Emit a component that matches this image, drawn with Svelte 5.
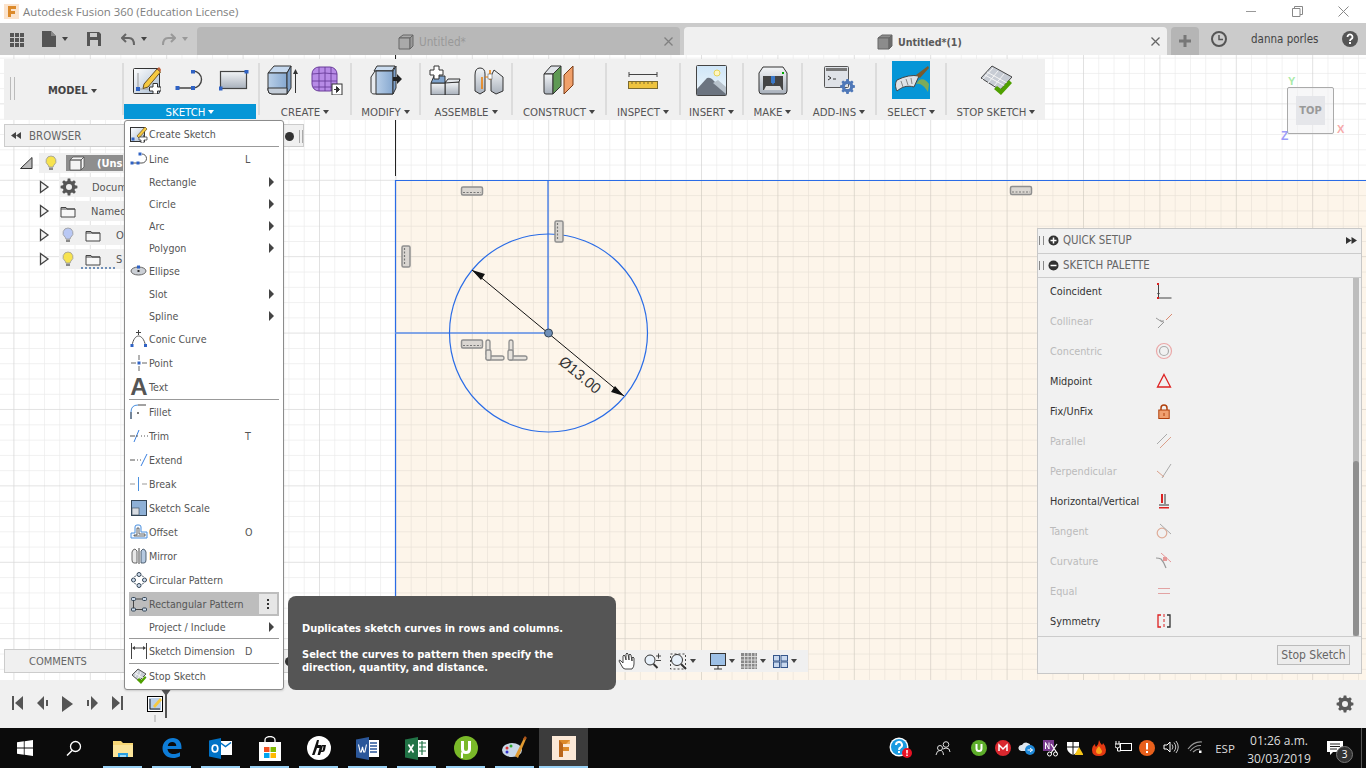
<script>
const s = (w, h, inner) => `<svg xmlns="http://www.w3.org/2000/svg" width="${w}" height="${h}" viewBox="0 0 ${w} ${h}" style="display:block">${inner}</svg>`;
const gear = (cx, cy, R, r, hole, fill, n = 8) => {
  let d = '';
  for (let i = 0; i < n; i++) {
    const a = (i / n) * Math.PI * 2, w = Math.PI / n * 0.55;
    const p = [[R, a - w * 0.7], [R, a + w * 0.7], [r, a + w * 1.25], [r, a + Math.PI * 2 / n - w * 1.25]];
    p.forEach(([q, t], j) => { d += `${i === 0 && j === 0 ? 'M' : 'L'}${(cx + q * Math.cos(t)).toFixed(2)} ${(cy + q * Math.sin(t)).toFixed(2)}`; });
  }
  d += `Z M${cx + hole} ${cy}a${hole} ${hole} 0 1 0 ${-2 * hole} 0a${hole} ${hole} 0 1 0 ${2 * hole} 0Z`;
  return `<path d="${d}" fill="${fill}" fill-rule="evenodd"/>`;
};
const blue = '#2f62c4', ink = '#444';
const dot = (x, y, z = 4, c = blue) => `<rect x="${x - z / 2}" y="${y - z / 2}" width="${z}" height="${z}" fill="${c}"/>`;
const bulb = (f) => s(12, 16, `<path d="M6 1a5 5 0 0 0-3 9c.6.6.8 1.200.8 2h4.400c0-.8.2-1.400.8-2A5 5 0 0 0 6 1Z" fill="${f}" stroke="#999" stroke-width=".8"/><path d="M4 12.500h4v2.500H4z" fill="#888"/>`);
const folder = s(16, 13, `<path d="M1 2.500h5l1 1.500h8v8H1z" fill="#f7f7f7" stroke="#444" stroke-width="1"/><path d="M1 4h14" stroke="#444"/>`);
const arrowR = s(11, 14, `<path d="M1.500 1.500 9 7l-7.500 5.500z" fill="#f4f4f4" stroke="#444" stroke-width="1.300"/>`);

const tb = {
  createSketch: s(28, 28, `<rect x=".5" y="2.500" width="26" height="25" rx="1" fill="url(#gW)" stroke="#333"/><path d="M5 7v16h16" stroke="#999" fill="none"/>${dot(5, 23)}<path d="M11 18 24 3l3.500 3L15 21l-5 1.500z" fill="#f6c93f" stroke="#6c5220"/><path d="M24 3l3.500 3 .5-2.500L26 1z" fill="#c0603a"/><path d="M20 17.500h4.500V21H28v4h-3.500v3H20v-3h-3.500v-4H20z" fill="#fff" stroke="#333"/>`),
  line: s(30, 20, `<path d="M2 18H18a8.500 8.500 0 0 0 0-17" fill="none" stroke="${ink}" stroke-width="1.400"/>${dot(2.5, 18)}${dot(18, 18)}${dot(18, 1.5)}`),
  rect: s(30, 21, `<rect x="1.500" y="1.500" width="26" height="17" fill="url(#gG)" stroke="#444" stroke-width="1.200"/>${dot(1.5, 18.5)}${dot(27.5, 1.5)}`),
  extrude: s(31, 30, `<path d="M1 8 7 1h17l-4 7z" fill="#c5d8ee" stroke="#333"/><path d="M1 8h19v21H5q-4 0-4-4z" fill="url(#gB)" stroke="#333"/><path d="M20 8l4-7v22l-4 6z" fill="#7d9fc8" stroke="#333"/><path d="M1 23h19v6H5q-4 0-4-4z" fill="#c4cdd8" stroke="#333"/><path d="M28.500 28V5" stroke="#333"/><path d="M26 9l2.500-5L31 9z" fill="#333"/>`),
  form: s(32, 30, `<rect x="1" y="2" width="25" height="24" rx="7" fill="#b78be6" stroke="#6a3d9a"/><path d="M1 9q12-2 25 0M1 16h25M2 22h23M8 2v24M14 2v24M20 2v24" stroke="#6a3d9a" fill="none" stroke-width=".9"/><rect x="21" y="19" width="10" height="11" fill="#fff" stroke="#333"/><path d="M23 24.500h3M25.500 21.500l3 3-3 3z" fill="#333" stroke="#333"/>`),
  modify: s(32, 30, `<path d="M7 1h18l-3 5H4z" fill="#cbdcef" stroke="#333"/><path d="M1 26C1 29 3 29 6 29h17V6H5L1 12z" fill="#e8ebef" stroke="#333"/><path d="M6 6h17v23H6z" fill="url(#gB)" stroke="#333"/><path d="M23 6l3-5v22l-3 6z" fill="#7d9fc8" stroke="#333"/><path d="M23 12h4V9l5 5-5 5v-3h-4z" fill="#222"/>`),
  asm1: s(32, 30, `<path d="M16 17h14v13H16z" fill="url(#gG)" stroke="#333"/><path d="M2 18h14v12H2z" fill="url(#gG)" stroke="#333"/><path d="M2 18l3-7h11v7z" fill="#7fa3cc" stroke="#333"/><path d="M16 18l3-4h12l-1 3z" fill="#e5e8ec" stroke="#333"/><path d="M5 1h5v4h4v5h-4v4H5v-4H1V5h4z" fill="#fff" stroke="#333"/>`),
  asm2: s(30, 30, `<path d="M1 26V10q0-7 5-7t5 6v17l-5 3z" fill="url(#gG)" stroke="#333"/><path d="M29 26V12l-9-7-3 6v15l5 3z" fill="url(#gG)" stroke="#333"/><path d="M8 12v12M16 5v10" stroke="#f07d00" stroke-width="1.500"/><path d="M11 12h6" stroke="#f07d00"/><rect x="14" y="9" width="4" height="5" fill="#fff" stroke="#666" stroke-width=".6"/>`),
  construct: s(32, 30, `<path d="M1 9 8 1h10l-8 8z" fill="#dfe3e8" stroke="#333"/><path d="M1 9h9v20H3q-2 0-2-2z" fill="url(#gG)" stroke="#333"/><path d="M10 9l8-8v20l-8 8z" fill="#5f9a55" stroke="#333"/><path d="M21 29V10l9-9v19z" fill="#f0a06a" stroke="#7b3a14"/>`),
  inspect: s(30, 18, `<path d="M1 1v5M29 1v5M1 3.500h28" stroke="#444" fill="none"/><rect x=".5" y="10.500" width="29" height="7" fill="#eec33e" stroke="#7b6a30"/><path d="M4 11v2M8 11v2M12 11v2M16 11v2M20 11v2M24 11v2" stroke="#7b6a30"/>`),
  insert: s(31, 31, `<rect x=".5" y=".5" width="30" height="30" rx="1" fill="url(#gSky)" stroke="#444"/><circle cx="21" cy="8" r="3" fill="#fff6c0" stroke="#e6d45a"/><path d="M1 30V24L11 13q2-1 5 1l14 14v2z" fill="#6c7480"/><path d="M17 18l5-3 8 7v7z" fill="#b8c2cc"/>`),
  make: s(30, 30, `<path d="M1 8 5 2h20l4 6v18q0 3-3 3H4q-3 0-3-3z" fill="url(#gG)" stroke="#333"/><rect x="5" y="11" width="20" height="14" fill="#444"/><path d="M8 21h14l2 4H6z" fill="#ddd"/><rect x="13" y="11" width="4" height="7" fill="#3a78c8"/><path d="M14 18h2l-1 2z" fill="#3a78c8"/><rect x="24" y="7" width="2" height="2" fill="#0a0"/>`),
  addins: s(31, 28, `<rect x=".5" y=".5" width="24" height="21" rx="1" fill="#dfe2e7" stroke="#555"/><rect x="2" y="2" width="21" height="3" fill="#777"/><path d="M4 10l3 2-3 2M9 13h3" stroke="#333" fill="none"/>${gear(23.5, 20.5, 7.5, 5.8, 2.6, '#4f78b8')}`),
  select: s(38, 38, `<rect width="38" height="38" fill="#0696d7"/><path d="M5 19q12-6 22-4l-5 11c-7-2-12 0-17 4-2-4-2-8 0-11z" fill="#dfe2e6" stroke="#444"/><path d="M9 20l2 6M14 18l2 6M19 17l1 6" stroke="#888"/><path d="M24 14 36 5l1 2-9 10z" fill="#7b5a2c"/><path d="M27 19c4-2 7 0 10 4l-1 8c-4-6-7-9-12-8z" fill="#7dab5a"/>`),
  stop: s(32, 30, `<path d="M1 13 12 1l20 11-12 13z" fill="#c7ccd4" stroke="#444"/><path d="M7 7l20 11M5 10l20 11M13 3l-11 12M18 6 8 18M24 9 14 21" stroke="#f5f5f5" fill="none"/><path d="M14 24l3-3 4 3 8-9 3 3-11 12z" fill="#4fa000"/>`)
};

const mi = {
  createS: s(18, 18, `<rect x=".5" y="2.500" width="14" height="14" fill="url(#gW)" stroke="#333"/>${dot(3, 14, 3)}<path d="M7 11 15 2l2 2-8 9z" fill="#f6c93f" stroke="#6c5220" stroke-width=".7"/><path d="M11 12h3v-2h0v2h3v3h-3v3h-3v-3H9v-3h2z" fill="#fff" stroke="#444" stroke-width=".8"/>`),
  line: s(18, 14, `<path d="M2 11h10a4.500 4.500 0 0 0 0-9" fill="none" stroke="#555"/>${dot(2, 11, 3)}${dot(8, 11, 3)}${dot(10, 2, 3)}`),
  ellipse: s(18, 12, `<ellipse cx="8.500" cy="6" rx="7.500" ry="4" fill="#ccd0d6" stroke="#666"/>${dot(8.5, 2, 3)}${dot(8.5, 6, 2, '#333')}`),
  conic: s(18, 18, `<path d="M2 16C3 9 6 6 8.500 6s6 3 7 10" fill="none" stroke="#555"/>${dot(2, 15.5, 3)}${dot(15.5, 15.5, 3)}<path d="M8.500 0v5M6 2.500h5" stroke="#444"/>`),
  point: s(16, 16, `<path d="M0 8h5M11 8h5M8 0v5M8 11v5" stroke="#666"/>${dot(8, 8, 3)}`),
  fillet: s(18, 16, `<path d="M1 15V8q0-7 7-7" fill="none" stroke="#4a90e0"/><path d="M8 1h8M1 8v7" stroke="#444"/>${dot(8, 9, 1.6, '#333')}`),
  trim: s(18, 14, `<path d="M0 7h5M11 7h1M14 7h1M17 7h1" stroke="#555"/><path d="M4 13 9 1" stroke="#3a80e0"/><path d="M6 7h2" stroke="#555"/>`),
  extend: s(18, 14, `<path d="M0 7h5M7 7h1M10 7h1" stroke="#555"/><path d="M11 13 17 1" stroke="#3a80e0"/>`),
  brk: s(18, 14, `<path d="M0 7h5M12 7h5" stroke="#999"/><path d="M8.500 0v14" stroke="#4a90e0"/>`),
  scale: s(16, 16, `<rect x=".5" y=".5" width="15" height="15" fill="#8eb0d6" stroke="#345"/><rect x="1" y="8" width="7" height="7" fill="#d8dce2" stroke="#345" stroke-width=".6"/>`),
  offset: s(18, 16, `<path d="M1 14V9h4V3q0-2 2-2h2q2 0 2 2v5h6v6z" fill="#f4f8fd" stroke="#4a90e0"/><path d="M4 12V11h3V4h2v6h6v2z" fill="none" stroke="#444" stroke-width=".8"/>`),
  mirror: s(16, 16, `<path d="M6 15H3q-2 0-2-3V4q1-3 3-3l2 2z" fill="#e8e8e8" stroke="#444" stroke-width=".8"/><path d="M10 15h3q2 0 2-3V4q-1-3-3-3l-2 2z" fill="#b5c9e0" stroke="#345" stroke-width=".8"/><path d="M8 0v16" stroke="#444"/>`),
  circ: s(16, 16, `<g fill="#cfdcec" stroke="#345"><circle cx="8" cy="2.500" r="2"/><circle cx="13.500" cy="8" r="2"/><circle cx="8" cy="13.500" r="2"/><circle cx="2.500" cy="8" r="2"/></g><path d="M5 3.500 3.500 5M11 3.500 12.500 5M5 12.500 3.500 11M11 12.500 12.500 11" stroke="#345"/>`),
  rectp: s(16, 15, `<g fill="#cfdcec" stroke="#345"><rect x=".5" y=".5" width="4" height="3" rx="1"/><rect x="11.500" y=".5" width="4" height="3" rx="1"/><rect x=".5" y="11" width="4" height="3" rx="1"/><rect x="11.500" y="11" width="4" height="3" rx="1"/></g><path d="M5 2h6M5 12.500h6M2.500 4v7" stroke="#444"/>`),
  dim: s(16, 16, `<path d="M.5 0v16M15.500 0v16M2 5h12" stroke="#444"/><path d="M1 5l3-2v4zM15 5l-3-2v4z" fill="#444"/>`),
  stopS: s(16, 16, `<path d="M1 7 7 1l8 5-7 7z" fill="#c7ccd4" stroke="#555"/><path d="M4 5l8 5M7 3 4 9M10 4 7 11" stroke="#f5f5f5"/><path d="M6 12l2-2 2 2 4-4 1.500 1.500L10 16z" fill="#4fa000"/>`)
};

const menu = [
  { t: 'Create Sketch', i: mi.createS },
  { sep: 1 },
  { t: 'Line', i: mi.line, k: 'L' },
  { t: 'Rectangle', sub: 1 }, { t: 'Circle', sub: 1 }, { t: 'Arc', sub: 1 }, { t: 'Polygon', sub: 1 },
  { t: 'Ellipse', i: mi.ellipse },
  { t: 'Slot', sub: 1 }, { t: 'Spline', sub: 1 },
  { t: 'Conic Curve', i: mi.conic },
  { t: 'Point', i: mi.point },
  { t: 'Text', a: 1 },
  { sep: 1 },
  { t: 'Fillet', i: mi.fillet },
  { t: 'Trim', i: mi.trim, k: 'T' },
  { t: 'Extend', i: mi.extend },
  { t: 'Break', i: mi.brk },
  { t: 'Sketch Scale', i: mi.scale },
  { t: 'Offset', i: mi.offset, k: 'O' },
  { t: 'Mirror', i: mi.mirror },
  { t: 'Circular Pattern', i: mi.circ },
  { t: 'Rectangular Pattern', i: mi.rectp, hl: 1 },
  { t: 'Project / Include', sub: 1 },
  { sep: 1 },
  { t: 'Sketch Dimension', i: mi.dim, k: 'D' },
  { sep: 1 },
  { t: 'Stop Sketch', i: mi.stopS }
];

const groups = [
  { l: 'SKETCH', active: 1, gap: 14, ic: [tb.createSketch, tb.line, tb.rect] },
  { l: 'CREATE', gap: 13, ic: [tb.extrude, tb.form] },
  { l: 'MODIFY', ic: [tb.modify] },
  { l: 'ASSEMBLE', gap: 13, ic: [tb.asm1, tb.asm2] },
  { l: 'CONSTRUCT', ic: [tb.construct] },
  { l: 'INSPECT', ic: [tb.inspect] },
  { l: 'INSERT', ic: [tb.insert] },
  { l: 'MAKE', ic: [tb.make] },
  { l: 'ADD-INS', ic: [tb.addins] },
  { l: 'SELECT', ic: [tb.select] },
  { l: 'STOP SKETCH', ic: [tb.stop] }
];

const pal = [
  { t: 'Coincident', on: 1, i: s(16, 18, `<path d="M2.500 2v14M2.500 16h13" stroke="#444"/>${dot(2, 2, 2, '#d22')}${dot(2, 16, 2, '#d22')}<path d="M1 11h3l-1.500 2z" fill="#444"/>`) },
  { t: 'Collinear', i: s(18, 16, `<path d="M3 15 9 9M1 5l6 4" stroke="#999"/><path d="M11 7l6-6" stroke="#d98a70"/><path d="M5 7l3 2v-2" stroke="#999" fill="none"/>`) },
  { t: 'Concentric', i: s(18, 18, `<circle cx="9" cy="9" r="7.500" fill="none" stroke="#eba8a8" stroke-width="1.200"/><circle cx="9" cy="9" r="4.500" fill="none" stroke="#aaa" stroke-width="1.200"/>`) },
  { t: 'Midpoint', on: 1, i: s(16, 16, `<path d="M8 1.500 14.500 14h-13z" fill="none" stroke="#d22" stroke-width="1.300"/>`) },
  { t: 'Fix/UnFix', on: 1, i: s(12, 15, `<path d="M3 6V4a3 3 0 0 1 6 0v2" fill="none" stroke="#b0400c" stroke-width="1.500"/><rect x=".8" y="6" width="10.400" height="8.500" fill="#f0a070" stroke="#b0400c"/><path d="M6 9v3" stroke="#b0400c"/>`) },
  { t: 'Parallel', i: s(16, 16, `<path d="M1 11 11 1" stroke="#aaa"/><path d="M4 15 15 4" stroke="#dba08a"/>`) },
  { t: 'Perpendicular', i: s(16, 16, `<path d="M6 15 15 1" stroke="#aaa"/><path d="M1 8l7 6" stroke="#dba08a"/>`) },
  { t: 'Horizontal/Vertical', on: 1, i: s(10, 15, `<path d="M6 0v10M0 11h10" stroke="#333"/><path d="M2 0h2v9H2zM0 13h10v1.500H0z" fill="#d22"/>`) },
  { t: 'Tangent', i: s(16, 16, `<circle cx="6" cy="10" r="4.800" fill="none" stroke="#dfac98" stroke-width="1.200"/><path d="M4 1l11 10" stroke="#aaa"/>`) },
  { t: 'Curvature', i: s(16, 16, `<path d="M0 5q3 0 5 1 3 3 5 9" fill="none" stroke="#999" stroke-width="1.200"/><path d="M5 0l10 9" stroke="#e59898"/>${dot(9, 6, 4, '#e59898')}`) },
  { t: 'Equal', i: s(14, 8, `<path d="M1 1.500h12M1 6.500h12" stroke="#e2a3a3"/>`) },
  { t: 'Symmetry', on: 1, i: s(14, 14, `<path d="M4 1H1v12h3" fill="none" stroke="#d22" stroke-width="1.300"/><path d="M10 1h3v12h-3" fill="none" stroke="#333" stroke-width="1.300"/><path d="M7 0v14" stroke="#d22" stroke-dasharray="3 2"/>`) }
];

const apps = [
  { i: s(16, 16, `<path d="M0 2.200 6.800 1.300V7.600H0zM7.600 1.200 16 0V7.600H7.600zM0 8.400h6.800v6.300L0 13.800zM7.600 8.400H16V16l-8.400-1.200z" fill="#fff"/>`) },
  { i: s(16, 16, `<circle cx="9.500" cy="6.500" r="5" fill="none" stroke="#fff" stroke-width="1.300"/><path d="M6 10.500 1 15.500" stroke="#fff" stroke-width="1.500"/>`) },
  { u: 1, i: s(22, 18, `<path d="M1 2h8l2 2h10v14H1z" fill="#f8d775"/><path d="M1 6h20v12H1z" fill="#fce59a"/><path d="M6 14h10v4h-2v-2H8v2H6z" fill="#2a9fe0"/><path d="M8 16h6v2H8z" fill="#9ad8f8"/>`) },
  { u: 1, i: s(20, 20, `<path d="M19.500 11H5.500c.3 3 2.700 5 6 5 2.300 0 4.800-.7 6.500-1.800v4C16 19.400 13.500 20 11 20 5 20 .5 16 .5 10.300.5 4.500 5 0 11 0c5 0 9 3.500 8.500 11zM5.800 8h8.500c0-2.500-1.800-4-4.100-4S6.100 5.600 5.800 8z" fill="#0e7dd8"/>`) },
  { u: 1, i: s(23, 21, `<path d="M10 3h13v14H10z" fill="#fff"/><path d="M11 4.500l5.500 4 5.500-4" stroke="#0072c6" stroke-width="1.500" fill="none"/><path d="M0 2.500 12 0v21L0 18.500z" fill="#0072c6"/><ellipse cx="6" cy="10.500" rx="2.800" ry="3.500" fill="none" stroke="#fff" stroke-width="1.700"/>`) },
  { u: 1, i: s(24, 25, `<path d="M1 6h22v19H1z" fill="#fff"/><path d="M7 7V4a5 3.500 0 0 1 10 0v3" fill="none" stroke="#fff" stroke-width="1.300"/><path d="M6 11h5.500v5H6z" fill="#f25022"/><path d="M12.500 11H18v5h-5.500z" fill="#7fba00"/><path d="M6 17h5.500v5H6z" fill="#00a4ef"/><path d="M12.500 17H18v5h-5.500z" fill="#ffb900"/>`) },
  { u: 1, i: s(24, 24, `<circle cx="12" cy="12" r="12" fill="#fff"/><path d="M10 4 5 19h2.500l2.500-7h2.500l-2 7H13l2.500-7.500q.5-2-1.500-2.500h-3L12 4z" fill="#111"/><path d="M15 9h4l-1 5q-.5 2-2.500 2h-2l.5-1.500h1.500l1-4h-1.500z" fill="#111"/>`) },
  { u: 1, i: s(23, 23, `<path d="M10 3h13v17H10z" fill="#fff"/><path d="M14 6h7M14 9h7M14 12h7M14 15h7" stroke="#2b579a" stroke-width="1.500"/><path d="M0 2.500 13 0v23L0 20.500z" fill="#2b579a"/><path d="M2.500 7.500 4.200 15h1.100L6.500 10l1.200 5h1.100l1.700-7.500" stroke="#fff" fill="none" stroke-width="1.100"/>`) },
  { u: 1, i: s(23, 23, `<path d="M10 3h13v17H10z" fill="#fff"/><path d="M14 6h7M14 10h7M14 14h7M17 4v14" stroke="#217346" stroke-width="1.200"/><path d="M0 2.500 13 0v23L0 20.500z" fill="#217346"/><path d="M3.500 7.500l5 8M8.500 7.500l-5 8" stroke="#fff" stroke-width="1.700"/>`) },
  { u: 1, i: s(24, 24, `<circle cx="12" cy="12" r="12" fill="#7ab929"/><path d="M7 5v8q0 5 5 5t5-5V5h-3v8q0 2-2 2t-2-2V5z" fill="#fff"/><path d="M7 16v6h2v-5z" fill="#fff"/>`) },
  { u: 1, i: s(25, 24, `<ellipse cx="10" cy="14" rx="10" ry="7" fill="#c9d8e8"/><circle cx="5" cy="12" r="1.500" fill="#d33"/><circle cx="9" cy="10" r="1.500" fill="#3a3"/><circle cx="5" cy="16" r="1.500" fill="#33c"/><path d="M13 20 22 2l2 1-8 19z" fill="#e09a30"/><path d="M21 3l2-3 2 2-2 2z" fill="#b0561a"/>`) },
  { u: 1, active: 1, i: s(24, 24, `<rect width="24" height="24" fill="#fbe8d6"/><path d="M7 4h11v4h-7v3h6v4h-6v6H7z" fill="#dc8a2a"/><path d="M11 8h7V4l-4 4z" fill="#f2b56a"/><path d="M7 4l4 4v13H7z" fill="#b9651a"/>`) }
];

const tray = [
  s(16, 16, `<circle cx="8" cy="8" r="8" fill="#5dad2a"/><path d="M4.500 4v4.500q0 3.500 3.500 3.500t3.500-3.500V4H9.500v4.500q0 1.500-1.500 1.500T6.500 8.500V4z" fill="#fff"/>`),
  s(16, 16, `<circle cx="8" cy="8" r="8" fill="#d9272e"/><path d="M4 11V5l4 4 4-4v6" fill="none" stroke="#fff" stroke-width="1.500"/>`),
  s(18, 15, `<path d="M3 11a3 3 0 0 1 1-6 5 5 0 0 1 9 1 3 3 0 0 1 1 5z" fill="#dfe6ee"/><circle cx="12" cy="10" r="5" fill="#1e88d8"/><path d="M9.500 10h5M12 8l2.500 2-2.500 2" stroke="#fff" fill="none"/>`),
  s(16, 17, `<rect width="11" height="11" fill="#7a3b8f"/><path d="M2.500 9V2.500L6 9V2.500" stroke="#fff" fill="none"/><path d="M8 4l6 9M14 4l-6 9" stroke="#fff" stroke-width="1.200"/><circle cx="6.500" cy="14" r="2" fill="none" stroke="#fff"/><circle cx="12.500" cy="14" r="2" fill="none" stroke="#fff"/>`),
  s(16, 16, `<path d="M0 2h12v6q0 4-6 7-6-3-6-7z" fill="#fff"/><path d="M6 2v13M0 7h12" stroke="#111"/><path d="M12 7l4.500 8h-9z" fill="#f5c518"/>`),
  s(14, 16, `<path d="M7 0q1 3 3 5 1-1 1-2 3 3 3 7 0 6-7 6T0 10q0-4 3-6 0 2 1 3 3-3 3-7z" fill="#e43a12"/><path d="M7 6q2 3 3 5 0 3-3 3t-3-3q0-2 3-5z" fill="#f9a11b"/>`),
  s(17, 13, `<rect x="5.500" y="3.500" width="11" height="7" fill="none" stroke="#fff"/><path d="M1 4V1M4 4V1M0 4h5v2q0 2-2.500 2T0 6zM2.500 8v3h3" stroke="#fff" fill="none"/>`),
  s(16, 16, `<circle cx="8" cy="8" r="8" fill="#e8601c"/><path d="M8 3v6.500M8 11v2" stroke="#fff" stroke-width="2"/>`),
  s(16, 14, `<path d="M1 5h3l3-3v10L4 9H1z" fill="none" stroke="#fff"/><path d="M9 4.500q2 2.500 0 5M11 2.500q3.500 4.500 0 9M13 1q4.500 6 0 12" fill="none" stroke="#ddd" stroke-width=".9"/>`),
  s(16, 13, `<path d="M1 9q6-8 14-7M3 11q5-6 11-5.500M6 12q3-3 7-3" fill="none" stroke="#999" stroke-width="1.100"/><rect x="12" y="10.500" width="2.500" height="2.500" fill="#fff"/>`)
];

const gearTool = s(18, 18, gear(9, 9, 8.5, 6.5, 3, '#595959'));
const gearDoc = s(18, 18, gear(9, 9, 8.5, 6.3, 3, '#555'));
const miniBox = (a, b) => s(16, 16, `<path d="M1 4 5 1h10l-3 3z" fill="${a}" stroke="#666"/><path d="M1 4h11v11H1z" fill="${a}" stroke="#666"/><path d="M12 4l3-3v11l-3 3z" fill="${b}" stroke="#666"/>`);
const rwd = s(10, 7, `<path d="M5 0v7L0 3.500zM10 0v7L5 3.500z" fill="#444"/>`);
const ffw = s(11, 7, `<path d="M0 0v7l5.500-3.500zM5.500 0v7L11 3.500z" fill="#333"/>`);
</script>

<svg class="defs" width="0" height="0" aria-hidden="true">
  <defs>
    <linearGradient id="gW" x1="0" y1="0" x2="1" y2="1"><stop offset="0" stop-color="#fff"/><stop offset="1" stop-color="#a9bcd2"/></linearGradient>
    <linearGradient id="gG" x1="0" y1="0" x2="0" y2="1"><stop offset="0" stop-color="#f3f5f7"/><stop offset="1" stop-color="#a8b0bb"/></linearGradient>
    <linearGradient id="gB" x1="0" y1="0" x2="1" y2="0"><stop offset="0" stop-color="#b9cfe8"/><stop offset="1" stop-color="#86a8d0"/></linearGradient>
    <linearGradient id="gSky" x1="0" y1="0" x2="0" y2="1"><stop offset="0" stop-color="#cfe6f8"/><stop offset="1" stop-color="#eef6fb"/></linearGradient>
  </defs>
</svg>

<div class="app">
  <header class="title">
    <span class="logo">{@html s(15, 15, `<rect width="15" height="15" fill="#fbe3cc"/><path d="M4 2h8v3H7v2h4v3H7v3H4z" fill="#dc8a2a"/>`)}</span>
    <span class="title-text">Autodesk Fusion 360 (Education License)</span>
    <span class="win">
      <span class="wbtn">{@html s(11, 11, `<path d="M0 5.500h10" stroke="#999"/>`)}</span>
      <span class="wbtn">{@html s(11, 11, `<path d="M.5 2.500h7.500v8H.5zM2.500 2.500V.5h8v8H8" fill="none" stroke="#888"/>`)}</span>
      <span class="wbtn">{@html s(11, 11, `<path d="M.5.5l10 10M10.500.5l-10 10" stroke="#888"/>`)}</span>
    </span>
  </header>

  <div class="tabbar">
    <div class="tools">
      <span class="t t1">{@html s(16, 15, `<g fill="#555"><rect x="1" y="1" width="4" height="4"/><rect x="6" y="1" width="4" height="4"/><rect x="11" y="1" width="4" height="4"/><rect x="1" y="6" width="4" height="4"/><rect x="6" y="6" width="4" height="4"/><rect x="11" y="6" width="4" height="4"/><rect x="1" y="11" width="4" height="4"/><rect x="6" y="11" width="4" height="4"/><rect x="11" y="11" width="4" height="4"/></g>`)}</span>
      <span class="t t2">{@html s(14, 16, `<path d="M0 0h9l5 5v11H0z" fill="#555"/><path d="M9 0v5h5" fill="#888"/>`)}</span>
      <span class="caret dk"></span>
      <span class="t t3">{@html s(14, 14, `<path d="M0 0h12l2 2v12H0z" fill="#555"/><rect x="3" y="1" width="7" height="4" fill="#ccc"/><rect x="3" y="8" width="8" height="6" fill="#ccc"/>`)}</span>
      <span class="t t4">{@html s(14, 13, `<path d="M5 1 1 5l4 4M1 5h7q5 0 5 7" fill="none" stroke="#666" stroke-width="2"/>`)}</span>
      <span class="caret dk"></span>
      <span class="t t5">{@html s(14, 13, `<path d="M9 1l4 4-4 4M13 5H6q-5 0-5 7" fill="none" stroke="#999" stroke-width="2"/>`)}</span>
      <span class="caret lt"></span>
    </div>
    <div class="tab off"><span class="tab-ico">{@html miniBox('#aaa', '#999')}</span><span class="tab-name">Untitled*</span><span class="x">{@html s(9, 9, `<path d="M.5.5l8 8M8.500.5l-8 8" stroke="#808080" stroke-width="1.300"/>`)}</span></div>
    <div class="tab on"><span class="tab-ico">{@html miniBox('#8c8c8c', '#6c6c6c')}</span><span class="tab-name">Untitled*(1)</span><span class="x">{@html s(9, 9, `<path d="M.5.5l8 8M8.500.5l-8 8" stroke="#666" stroke-width="1.300"/>`)}</span></div>
    <div class="plus">{@html s(14, 14, `<path d="M7 1v12M1 7h12" stroke="#777" stroke-width="3"/>`)}</div>
    <span class="clock">{@html s(16, 16, `<circle cx="8" cy="8" r="7" fill="#ccc" stroke="#555" stroke-width="2"/><path d="M8 4v4.500h4" fill="none" stroke="#555" stroke-width="1.500"/>`)}</span>
    <span class="user">danna porles</span>
    <span class="help">{@html s(16, 16, `<circle cx="8" cy="8" r="8" fill="#555"/><path d="M5.500 6a2.500 2.500 0 1 1 3.800 2.100C8.400 8.700 8 9 8 10" fill="none" stroke="#fff" stroke-width="1.800"/><rect x="7" y="11" width="2" height="2" fill="#fff"/>`)}</span>
  </div>

  <main class="canvas">
    <svg class="scene" width="1366" height="625" viewBox="0 55 1366 625">
      <defs>
        <pattern id="minor" width="15.280" height="15.280" patternUnits="userSpaceOnUse" x="13.400" y="11.800">
          <path d="M0 0V15.280M0 0H15.280" stroke="#000" stroke-opacity=".08" stroke-width="1.300"/>
        </pattern>
        <pattern id="major" width="76.400" height="76.400" patternUnits="userSpaceOnUse" x="13.400" y="26.900">
          <path d="M0 0V76.400M0 0H76.400" stroke="#000" stroke-opacity=".08" stroke-width="1.600"/>
        </pattern>
      </defs>
      <rect x="0" y="55" width="1366" height="625" fill="#fff"/>
      <rect x="395" y="180" width="971" height="500" fill="#fdf5ea"/>
      <rect x="0" y="55" width="1366" height="625" fill="url(#minor)"/>
      <rect x="0" y="55" width="1366" height="625" fill="url(#major)"/>
      <path d="M395.500 55V176" stroke="#222"/>
      <path d="M395 180.500H1366M395.500 180V680M548 180V333" stroke="#2a6ce6" stroke-width="1.200"/>
      <path d="M395 333H548" stroke="#5c8ee8" stroke-width="1.500"/>
      <circle cx="548.500" cy="333" r="99" fill="none" stroke="#2a6ce6" stroke-width="1.200"/>
      <path d="M472 270 624 396" stroke="#111" stroke-width="1"/>
      <path d="M472 270l13 4-4 6zM624 396l-13-4 4-6z" fill="#111"/>
      <circle cx="548.500" cy="333" r="4" fill="#6f8fb8" stroke="#345"/>
      <text x="580" y="380" font-size="15" text-anchor="middle" fill="#333" transform="rotate(39.700 580 375)" class="dimtxt">Ø13.00</text>
      <g fill="#dad6d1" stroke="#8f8f8f" stroke-width="1.500">
        <rect x="461.500" y="187" width="21" height="8" rx="1.500"/>
        <rect x="1010.500" y="186.500" width="21" height="8" rx="1.500"/>
        <rect x="461.500" y="340" width="21" height="8" rx="1.500"/>
        <rect x="555" y="221" width="8" height="21" rx="1.500"/>
        <rect x="402" y="246" width="8" height="21" rx="1.500"/>
      </g>
      <g fill="none" stroke="#777" stroke-width="1.200" stroke-dasharray="2 1.500">
        <path d="M463 192.500H481M1012 192H1030M463 345.500H481M557.500 223V240M404.500 248V265"/>
      </g>
      <g fill="#e6e2dc" stroke="#8f8f8f" stroke-width="1.300">
        <rect x="486" y="340" width="4" height="16" rx="2"/><rect x="486" y="356" width="18" height="4" rx="2"/><rect x="486" y="350" width="5" height="10" rx="1.500"/>
        <rect x="509" y="340" width="4" height="16" rx="2"/><rect x="509" y="356" width="18" height="4" rx="2"/><rect x="508" y="350" width="5" height="10" rx="1.500"/>
      </g>
    </svg>

    <div class="cube">
      <span class="ax ay">Y</span>
      <div class="cube-box"><div class="cube-face">TOP</div></div>
      <span class="ax ax2">X</span>
      <span class="ax az">Z</span>
    </div>

    <div class="toolbar">
      <div class="model"><span class="grip"></span><span class="model-l">MODEL</span><span class="caret dk"></span></div>
      {#each groups as g}
        <div class="group" class:active={g.active}>
          <div class="icons" style:gap="{g.gap || 0}px">
            {#each g.ic as i}{@html i}{/each}
          </div>
          <div class="lab"><span>{g.l}</span><span class="caret" class:wh={g.active} class:dk={!g.active}></span></div>
        </div>
      {/each}
    </div>

    <section class="panel browser">
      <div class="phead"><span class="rw">{@html rwd}</span><span class="ptitle">BROWSER</span><span class="minus right"></span><span class="pgrip"></span></div>
      <div class="tree">
        <div class="row r0">
          <span class="tri">{@html s(13, 12, `<path d="M12 .5V11.500H.5z" fill="#bbb" stroke="#333"/>`)}</span>
          <span class="chip c0">
            <span class="b">{@html bulb('#f7e34f')}</span>
            <span class="rootbar">{@html s(16, 15, `<path d="M1 4l3-3h11l-3 3zM1 4h11v10H1zM12 4l3-3v10l-3 3z" fill="#f4f4f4" stroke="#555" stroke-width=".8"/>`)}<b>(Uns</b></span>
          </span>
        </div>
        <div class="row"><span class="arr">{@html arrowR}</span><span class="chip c2"><span class="ci">{@html gearDoc}</span><span class="rt">Docum</span></span></div>
        <div class="row"><span class="arr">{@html arrowR}</span><span class="chip c2"><span class="ci">{@html folder}</span><span class="rt rt2">Named</span></span></div>
        <div class="row"><span class="arr">{@html arrowR}</span><span class="chip c2"><span class="b2">{@html bulb('#b9c8f4')}</span><span class="ci2">{@html folder}</span><span class="rt o">O</span></span></div>
        <div class="row"><span class="arr">{@html arrowR}</span><span class="chip c2"><span class="b2">{@html bulb('#f7e34f')}</span><span class="ci2 wavy">{@html folder}</span><span class="rt o">S</span></span></div>
      </div>
    </section>

    <section class="panel comments">
      <div class="phead"><span class="ptitle">COMMENTS</span><span class="minus right"></span></div>
    </section>

    <aside class="palette">
      <div class="phd first"><span class="pg"></span><span class="circ">{@html s(9, 9, `<path d="M4.500 1.500v6M1.500 4.500h6" stroke="#fff" stroke-width="1.500"/>`)}</span><span>QUICK SETUP</span><span class="ff">{@html ffw}</span></div>
      <div class="phd"><span class="pg"></span><span class="circ">{@html s(9, 9, `<path d="M1.500 4.500h6" stroke="#fff" stroke-width="1.500"/>`)}</span><span>SKETCH PALETTE</span></div>
      <div class="plist">
        <div class="prows">
          {#each pal as p}
            <div class="prow" class:on={p.on}><span class="pn">{p.t}</span><span class="pi">{@html p.i}</span></div>
          {/each}
        </div>
        <div class="scroll"><div class="thumb"></div></div>
      </div>
      <div class="pfoot"><span class="stopbtn">Stop Sketch</span></div>
    </aside>

    <div class="nav">
      <span class="n n1">{@html s(17, 18, `<path d="M5 16 1 9q0-2 2 0l2 2V4q1-2 2 0l1 4V2q1-2 2 0l1 6V3q1-2 2 0l1 6V6q1-2 2 0v6q0 3-2 5H7z" fill="#fff" stroke="#333" stroke-width=".9"/>`)}</span>
      <span class="n n2">{@html s(17, 17, `<circle cx="6" cy="7" r="5" fill="#e8f1fa" stroke="#333"/><path d="M9.500 11l4 4" stroke="#333" stroke-width="2"/><path d="M12 3h5M14.500 .5v5M12 7.500h5" stroke="#333" stroke-width=".9"/>`)}</span>
      <span class="n n3">{@html s(17, 17, `<rect x=".5" y="1" width="15" height="15" fill="none" stroke="#444" stroke-dasharray="2 2"/><circle cx="7" cy="7" r="5.500" fill="#e8f1fa" stroke="#333"/><path d="M11 11l5 5" stroke="#333" stroke-width="2"/>`)}</span>
      <span class="caret dk"></span>
      <span class="n n4">{@html s(16, 17, `<rect x=".5" y=".5" width="15" height="12" fill="#9dc0e6" stroke="#333"/><path d="M8 13v3M4 16h8" stroke="#333"/>`)}</span>
      <span class="caret dk"></span>
      <span class="n n5">{@html s(16, 16, `<rect width="16" height="16" fill="#888"/><path d="M3.500 0v16M7 0v16M10.500 0v16M14 0v16M0 3.500h16M0 7h16M0 10.500h16M0 14h16" stroke="#ddd" stroke-width=".9"/>`)}</span>
      <span class="caret dk"></span>
      <span class="n n6">{@html s(15, 13, `<rect x=".5" y=".5" width="6" height="5.500" fill="#c8d8ee" stroke="#35568a"/><rect x="8" y=".5" width="6.500" height="5.500" fill="#c8d8ee" stroke="#35568a"/><rect x=".5" y="7" width="6" height="5.500" fill="#c8d8ee" stroke="#35568a"/><rect x="8" y="7" width="6.500" height="5.500" fill="#c8d8ee" stroke="#35568a"/>`)}</span>
      <span class="caret dk"></span>
    </div>

    <nav class="menu">
      {#each menu as m}
        {#if m.sep}
          <div class="msep"></div>
        {:else}
          <div class="mi" class:short={m.sub && !m.i} class:hl={m.hl}>
            <span class="mic">{#if m.a}<span class="bigA">A</span>{:else if m.i}{@html m.i}{/if}</span>
            <span class="mt">{m.t}</span>
            {#if m.k}<span class="mk">{m.k}</span>{/if}
            {#if m.sub}<span class="msub"></span>{/if}
            {#if m.hl}<span class="dots"><i></i><i></i><i></i></span>{/if}
          </div>
        {/if}
      {/each}
    </nav>

    <div class="tip">
      <p>Duplicates sketch curves in rows and columns.</p>
      <p>Select the curves to pattern then specify the direction, quantity, and distance.</p>
    </div>
  </main>

  <section class="timeline">
    <div class="tctrl">
      <span class="tc">{@html s(13, 14, `<path d="M1 0h2v14H1zM12 0v14L4 7z" fill="#555"/>`)}</span>
      <span class="tc">{@html s(13, 14, `<path d="M8 0v14L1 7zM10 4h2v6h-2z" fill="#555"/>`)}</span>
      <span class="tc">{@html s(13, 16, `<path d="M1 0l11 8L1 16z" fill="#555"/>`)}</span>
      <span class="tc">{@html s(13, 14, `<path d="M5 0v14l7-7zM1 4h2v6H1z" fill="#555"/>`)}</span>
      <span class="tc">{@html s(13, 14, `<path d="M10 0h2v14h-2zM1 0v14l8-7z" fill="#555"/>`)}</span>
    </div>
    <div class="feature">{@html s(16, 16, `<rect x=".5" y=".5" width="15" height="15" fill="#fff" stroke="#000"/><rect x="2" y="2" width="12" height="12" fill="#bcd0e8"/><path d="M3 3v10h10" stroke="#222" fill="none"/><path d="M6 10 13 2l2 2-7 8z" fill="#f6c93f"/>`)}<span class="ftick"></span></div>
    <div class="marker">{@html s(12, 30, `<path d="M0 0h12L6 8z" fill="#555"/><path d="M6 6v24" stroke="#555" stroke-width="2"/>`)}</div>
    <span class="tgear">{@html gearTool}</span>
  </section>

  <footer class="taskbar">
    <div class="apps">
      {#each apps as a}
        <div class="app-i" class:u={a.u} class:act={a.active}>{@html a.i}</div>
      {/each}
    </div>
    <div class="tr-help">{@html s(24, 22, `<circle cx="10" cy="10" r="9.500" fill="#fff"/><circle cx="10" cy="10" r="8" fill="#1b9be0"/><path d="M7 8a3 3 0 1 1 4.500 2.500C10.500 11 10 11.500 10 13" fill="none" stroke="#fff" stroke-width="2"/><rect x="9" y="14" width="2" height="2" fill="#fff"/><circle cx="18" cy="16" r="5" fill="#e81123"/><path d="M18 13v3.500M18 17.500v1.500" stroke="#fff" stroke-width="1.500"/>`)}</div>
    <div class="tr-ppl">{@html s(16, 15, `<circle cx="5" cy="7" r="2.500" fill="none" stroke="#ddd"/><path d="M1 14q1-5 4-4.500 3-.5 3.500 4.500" fill="none" stroke="#ddd"/><circle cx="11" cy="3.500" r="2.800" fill="none" stroke="#ddd"/><path d="M8 8q3-2 6 0l1 3" fill="none" stroke="#ddd"/>`)}</div>
    <div class="tray">
      {#each tray as t}<div class="ti">{@html t}</div>{/each}
    </div>
    <span class="esp">ESP</span>
    <div class="clockt"><span>01:26 a.m.</span><span>30/03/2019</span></div>
    <div class="notif">{@html s(16, 14, `<path d="M0 0h16v11H6l-3 3v-3H0z" fill="#fff"/><path d="M3 3h10M3 5.500h10M3 8h7" stroke="#222"/>`)}<span class="nbadge">3</span></div>
    <span class="desk"></span>
  </footer>
</div>

<style>
  :global(body) { margin: 0; background: #fff; }
  .defs { position: absolute; }
  .app {
    width: 1366px; height: 768px; display: flex; flex-direction: column; overflow: hidden;
    font-family: "DejaVu Sans", "Liberation Sans", sans-serif; font-stretch: condensed;
    font-size: 10.6px; color: #555;
  }
  .title { height: 23px; flex: none; display: flex; align-items: center; background: #fff; padding-left: 4px; }
  .logo { margin-right: 4px; }
  .title-text { font-family: "Open Sans", sans-serif; font-stretch: normal; font-size: 11.4px; color: #7e7e7e; }
  .win { margin-left: auto; display: flex; }
  .wbtn { width: 46px; height: 20px; display: flex; align-items: center; justify-content: center; }

  .tabbar { height: 32px; flex: none; background: #cbcbcb; display: flex; align-items: flex-end; box-sizing: border-box; position: relative; }
  .tools { width: 197px; height: 32px; flex: none; display: flex; align-items: center; }
  .t { display: block; }
  .t1 { margin-left: 9px; } .t2 { margin-left: 17px; } .t3 { margin-left: 19px; } .t4 { margin-left: 20px; } .t5 { margin-left: 15px; }
  .tools .caret { margin-left: 6px; }
  .caret { display: inline-block; width: 0; height: 0; border: 3.5px solid transparent; border-bottom: 0; border-top-width: 4px; flex: none; }
  .dk { border-top-color: #444; } .lt { border-top-color: #999; } .wh { border-top-color: #fff; }
  .tab { width: 483px; height: 28px; flex: none; box-sizing: border-box; border-radius: 4px 4px 0 0; display: flex; align-items: center; justify-content: flex-start; position: relative; margin-right: 4px; padding-top: 2px; }
  .tab.off { background: #b8b8b8; color: #989898; padding-left: 201px; font-size: 11.7px; }
  .tab.on { background: #f0f0f0; color: #5a5a5a; font-weight: 700; padding-left: 193px; font-size: 10.6px; }
  .tab-ico { margin-right: 5px; }
  .x { position: absolute; right: 7px; top: 10px; }
  .plus { width: 28px; height: 28px; flex: none; border-radius: 4px 4px 0 0; background: #b5b5b5; display: flex; align-items: center; justify-content: center; }
  .clock { margin: 0 0 8px 12px; }
  .user { margin: 0 0 9px 24px; font-size: 11.5px; color: #444; white-space: nowrap; width: 64px; }
  .help { margin: 0 0 8px 27px; }

  .canvas { position: relative; flex: none; height: 625px; z-index: 2; }
  .scene { position: absolute; inset: 0; display: block; }
  .dimtxt { font-family: "Liberation Sans", sans-serif; }

  .cube { position: absolute; left: 1283px; top: 20px; width: 66px; height: 68px; }
  .cube-box { position: absolute; left: 4px; top: 12px; width: 45px; height: 45px; border: 1px solid #aaa; border-radius: 2px; background: rgba(240,240,242,.5); display: flex; align-items: center; justify-content: center; }
  .cube-face { width: 29px; height: 29px; background: #e5e6ea; color: #999; font-weight: 700; font-size: 11px; display: flex; align-items: center; justify-content: center; }
  .ax { position: absolute; font: 700 11px "Liberation Sans", sans-serif; }
  .ay { left: 5px; top: 0; color: #a8eaa8; } .ax2 { left: 54px; top: 48px; color: #f6aaaa; } .az { left: -2px; top: 54px; color: #9c9cf8; font-size: 12px; }

  .toolbar {
    position: absolute; left: 4px; top: 4px; width: 1041px; height: 61px; background: #f0f0f0;
    display: grid; grid-template-columns: 118px 136px 92px 69px 92px 94px 74px 63px 59px 74px 70px 100px;
  }
  .model { display: flex; align-items: center; position: relative; padding: 2px 0 0 44px; gap: 3px; }
  .grip { position: absolute; left: 6px; top: 18px; width: 3px; height: 23px; border-left: 1px solid #bbb; border-right: 1px solid #bbb; }
  .model-l { font-weight: 700; font-size: 11px; color: #444; }
  .group { position: relative; display: flex; flex-direction: column; border-left: 2px solid transparent; box-sizing: border-box; }
  .group::before { content: ""; position: absolute; left: -2px; top: 4px; bottom: 5px; width: 2px; background: #dcdcdc; }
  .icons { height: 45px; flex: none; box-sizing: border-box; padding-bottom: 3px; display: flex; align-items: center; justify-content: center; }
  .lab { height: 15px; box-sizing: border-box; padding-top: 1px; display: flex; align-items: center; justify-content: center; gap: 3px; font-size: 11.3px; color: #555; white-space: nowrap; }
  .group.active .lab { background: #0696d7; color: #fff; margin-right: 2px; }

  .panel { position: absolute; left: 4px; width: 300px; box-sizing: border-box; }
  .browser { top: 69px; }
  .comments { top: 594px; }
  .phead { height: 24px; box-sizing: border-box; background: #f0f0f0; border: 1px solid #ccc; display: flex; align-items: center; padding-left: 6px; position: relative; color: #666; font-size: 11px; }
  .browser .phead { height: 23px; font-size: 11.4px; }
  .rw { margin-right: 8px; display: block; }
  .comments .ptitle { margin-left: 18px; }
  .minus { position: absolute; left: 280px; top: 7px; width: 9px; height: 9px; border-radius: 50%; background: #333; }
  .pgrip { position: absolute; left: 294px; top: 5px; width: 2px; height: 13px; border-left: 1px solid #aaa; border-right: 1px solid #aaa; }
  .tree { padding-top: 4px; display: flex; flex-direction: column; }
  .row { height: 24px; display: flex; align-items: center; position: relative; padding-left: 35px; font-size: 11px; white-space: nowrap; }
  .r0 { padding-left: 16px; }
  .tri { margin-right: 6px; }
  .chip { display: flex; align-items: center; background: #f0f0f0; height: 20px; width: 66px; flex: none; }
  .c0 { width: 85px; }
  .chip .b { margin-left: 6px; }
  .rootbar { display: flex; align-items: center; background: #8e8e8e; height: 16px; margin-left: 9px; padding-left: 3px; color: #fff; flex: none; width: 57px; box-sizing: border-box; }
  .rootbar b { margin-left: 12px; }
  .c2 { margin-left: 9px; height: 20px; }
  .ci { margin-left: 1px; width: 20px; flex: none; }
  .rt { margin-left: 12px; flex: none; }
  .rt2 { margin-left: 11px; }
  .b2 { margin-left: 3px; width: 12px; flex: none; }
  .ci2 { margin-left: 11px; position: relative; flex: none; }
  .chip .o { margin-left: 15px; color: #555; }
  .wavy::after { content: ""; position: absolute; left: -4px; right: -14px; bottom: -3px; border-bottom: 2px dotted #6f8fb8; }

  .palette { position: absolute; left: 1037px; top: 173px; width: 325px; height: 446px; box-sizing: border-box; background: #f1f1f1; border: 1px solid #c8c8c8; display: flex; flex-direction: column; font-size: 10.8px; }
  .phd { height: 24px; flex: none; box-sizing: border-box; border-bottom: 1px solid #ccc; display: flex; align-items: center; padding: 0 0 1px 1px; color: #666; font-size: 11.4px; }
  .phd.first { height: 25px; padding-bottom: 2px; }
  .pg { width: 3px; height: 9px; border-left: 1px solid #888; border-right: 1px solid #888; margin-right: 5px; }
  .circ { width: 9px; height: 9px; border-radius: 50%; background: #333; margin-right: 5px; display: block; padding: 0; box-shadow: 0 0 0 .5px #333; }
  .ff { margin-left: auto; margin-right: 4px; }
  .plist { height: 359px; flex: none; position: relative; border-bottom: 1px solid #ccc; box-sizing: border-box; }
  .prows { margin-top: -2px; }
  .prow { height: 30px; display: flex; align-items: center; padding-left: 12px; color: #bbb; }
  .prow.on { color: #333; }
  .pn { width: 102px; white-space: nowrap; }
  .pi { width: 24px; display: flex; justify-content: center; }
  .scroll { position: absolute; right: 2px; top: 0; bottom: 0; width: 6px; background: #bdbdbd; }
  .thumb { position: absolute; left: 0; right: 0; top: 183px; bottom: 0; background: #8f8f8f; border-radius: 3px; }
  .pfoot { flex: 1; display: flex; align-items: center; justify-content: flex-end; padding-right: 11px; }
  .stopbtn { height: 20px; box-sizing: border-box; width: 73px; border: 1px solid #bbb; background: #ececec; display: flex; align-items: center; justify-content: center; color: #666; font-size: 12px; }

  .nav { position: absolute; left: 616px; top: 595px; width: 192px; height: 22px; background: #f0f0f0; display: flex; align-items: center; }
  .n { display: block; }
  .n1 { margin-left: 2px; } .n2 { margin-left: 9px; } .n3 { margin-left: 9px; } .n4 { margin-left: 14px; } .n5 { margin-left: 6px; } .n6 { margin-left: 7px; }
  .nav .caret { margin-left: 3px; }

  .menu { position: absolute; left: 124px; top: 65px; width: 160px; height: 570px; box-sizing: border-box; background: #fff; border: 1px solid #8c8c8c; border-radius: 3px; padding: 1px 4px 0; box-shadow: 0 1px 2px rgba(0,0,0,.15); z-index: 3; }
  .mi { height: 24px; display: flex; align-items: center; position: relative; white-space: nowrap; color: #555; }
  .mi.short { height: 22px; }
  .mi.hl { background: #bdbdbd; }
  .mic { width: 20px; flex: none; display: flex; justify-content: center; }
  .bigA { font: 700 24px/22px "Liberation Sans", sans-serif; color: #555; }
  .mk { position: absolute; left: 116px; }
  .msub { position: absolute; left: 140px; top: 6px; border: 5px solid transparent; border-left: 5px solid #444; border-right: 0; }
  .dots { position: absolute; right: 2px; top: 2px; width: 18px; height: 20px; background: #e6e6e6; display: flex; flex-direction: column; align-items: center; justify-content: center; gap: 2px; }
  .dots i { width: 2px; height: 2px; background: #333; display: block; }
  .msep { height: 1px; background: #999; }

  .tip { position: absolute; left: 288px; top: 541px; width: 328px; height: 94px; box-sizing: border-box; background: #555; border-radius: 8px; padding: 26px 14px 0; color: #fff; font-weight: 700; font-size: 11px; line-height: 13px; z-index: 3; }
  .tip p { margin: 0 0 13px; }

  .timeline { height: 50px; flex: none; box-sizing: border-box; background: #f0f0f0; position: relative; z-index: 1; border-top: 2px solid #ccc; margin-top: -2px; display: flex; align-items: center; }
  .tctrl { display: flex; margin-left: 11px; gap: 12px; }
  .feature { margin-left: 23px; position: relative; }
  .ftick { position: absolute; left: 7px; top: 19px; width: 2px; height: 7px; background: #ccc; }
  .marker { position: absolute; left: 160px; top: 8px; }
  .tgear { position: absolute; right: 12px; top: 15px; }

  .taskbar { height: 40px; flex: none; background: #0b0b0b; display: flex; align-items: center; color: #ddd; position: relative; z-index: 1; font-family: "Open Sans", sans-serif; font-stretch: normal; font-size: 12px; }
  .apps { display: flex; width: 889px; height: 40px; flex: none; }
  .app-i { width: 49px; height: 40px; flex: none; box-sizing: border-box; display: flex; align-items: center; justify-content: center; position: relative; }
  .app-i.u::after { content: ""; position: absolute; left: 5px; right: 5px; bottom: 0; height: 2px; background: #99d1f5; }
  .app-i.act { background: #3c3c3c; }
  .app-i.act::after { left: 0; right: 0; }
  .tr-help { width: 24px; flex: none; }
  .tr-ppl { margin-left: 22px; width: 20px; flex: none; }
  .tray { display: flex; margin-left: 12px; }
  .ti { width: 24px; display: flex; justify-content: center; }
  .esp { width: 34px; text-align: center; margin-left: 1px; font-size: 11.5px; }
  .clockt { width: 68px; margin-left: 3px; padding-top: 3px; display: flex; flex-direction: column; align-items: center; line-height: 18px; white-space: nowrap; }
  .notif { width: 43px; position: relative; display: flex; justify-content: center; }
  .nbadge { position: absolute; left: 23px; top: 5px; width: 15px; height: 15px; border-radius: 50%; background: #333; border: 1px solid #777; color: #fff; font-size: 10px; line-height: 15px; text-align: center; }
  .desk { position: absolute; left: 1361px; top: 0; height: 40px; width: 1px; background: #555; }
</style>
